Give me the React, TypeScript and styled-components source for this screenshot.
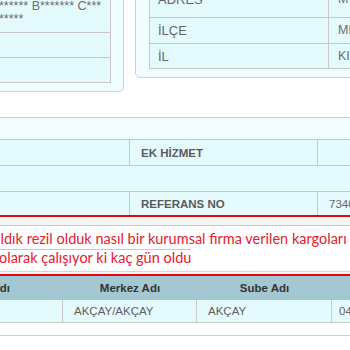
import styled, { createGlobalStyle } from 'styled-components'

const GlobalStyle = createGlobalStyle`
  html, body {
    margin: 0;
    padding: 0;
    background: #ffffff;
    overflow: hidden;
  }
  body {
    font-family: 'Liberation Sans', Arial, sans-serif;
    color: #666666;
  }
`

const Page = styled.div`
  width: 820px;
  margin-left: -200px;
`

const TopSection = styled.div`
  display: flex;
  align-items: flex-start;
  gap: 11px;
  margin-top: -17px;
`

const Panel = styled.div<{ $width?: number; $lift?: number }>`
  box-sizing: border-box;
  ${(props) => (props.$width ? `width: ${props.$width}px;` : 'flex: 1;')}
  margin-top: ${(props) => -(props.$lift ?? 0)}px;
  background-color: #effdfe;
  border: 1px solid #c9d1d3;
  border-radius: 5px;
  padding: 8px 12px 8px 13px;
`

const InfoTable = styled.div`
  border: 1px solid #c8c8c8;
  background-color: #e4fafd;
`

const InfoRow = styled.div<{ $height: number; $label: number }>`
  box-sizing: border-box;
  display: grid;
  grid-template-columns: ${(props) => props.$label}px 1fr;
  height: ${(props) => props.$height}px;
  border-bottom: 1px solid #c8c8c8;

  &:last-child {
    border-bottom: none;
  }
`

const InfoLabel = styled.div`
  display: flex;
  align-items: center;
  padding-left: 8px;
  border-right: 1px solid #c8c8c8;
  font-size: 13px;
  color: #666666;
`

const InfoValue = styled.div`
  display: flex;
  flex-direction: column;
  justify-content: center;
  padding-left: 9px;
  font-size: 12.5px;
  line-height: 13px;
  color: #6c6c6c;
  white-space: nowrap;
`

const MidPanel = styled.div`
  margin-top: 25px;
  background-color: #effdfe;
  border-top: 1px solid #c8c8c8;
  padding-top: 21px;
`

const DetailTable = styled.div`
  border-top: 1px solid #c8c8c8;
  background-color: #e4fafd;
`

const DetailRow = styled.div<{ $height: number; $last?: boolean }>`
  box-sizing: border-box;
  display: grid;
  grid-template-columns: 330px 188px 1fr;
  height: ${(props) => props.$height}px;
  border-bottom: ${(props) => (props.$last ? 'none' : '1px solid #c8c8c8')};
`

const DetailCell = styled.div<{ $bold?: boolean; $span?: boolean }>`
  display: flex;
  align-items: center;
  padding-left: 11px;
  font-size: 11.5px;
  font-weight: ${(props) => (props.$bold ? 'bold' : 'normal')};
  color: ${(props) => (props.$bold ? '#5a5a5a' : '#666666')};
  border-right: ${(props) => (props.$span ? 'none' : '1px solid #c8c8c8')};
  grid-column: ${(props) => (props.$span ? '1 / -1' : 'auto')};

  &:last-child {
    border-right: none;
  }
`

const ComplaintBox = styled.div`
  border-top: 2px solid #e30613;
  border-bottom: 2px solid #e30613;
  background-color: #f4f6f6;
  padding-top: 8px;
  padding-bottom: 2px;
`

const ComplaintText = styled.div`
  background-color: #ffffff;
  border-top: 1px solid #c8c8c8;
  border-bottom: 1px solid #d8d8d8;
  padding: 3px 0 5px 199px;
  font-family: Lato, 'Noto Sans', sans-serif;
  font-size: 14.5px;
  color: #e2202e;
`

const FirstLine = styled.div`
  height: 20px;
  line-height: 20px;
  white-space: nowrap;
  text-indent: -13px;
`

const SecondLine = styled.div`
  height: 17px;
  line-height: 16px;
`

const SecondLineText = styled.span`
  display: inline-block;
  border-top: 1px solid #c8c8c8;
`

const GridHeader = styled.div`
  display: grid;
  grid-template-columns: 263px 134px 135px 1fr;
  height: 24px;
  background-color: #a3c8d2;
`

const HeaderCell = styled.div<{ $endPad?: number }>`
  display: flex;
  align-items: center;
  justify-content: ${(props) => (props.$endPad ? 'flex-end' : 'center')};
  padding-right: ${(props) => props.$endPad ?? 0}px;
  font-size: 11.5px;
  font-weight: bold;
  color: #333333;
  white-space: nowrap;
`

const GridRow = styled.div`
  box-sizing: border-box;
  display: grid;
  grid-template-columns: 263px 134px 135px 1fr;
  height: 23px;
  background-color: #e4fafd;
  border-bottom: 1px solid #c8c8c8;
`

const GridCell = styled.div`
  display: flex;
  align-items: center;
  padding-left: 11px;
  font-size: 11.5px;
  color: #5f5f5f;
  border-right: 1px solid #c8c8c8;
  white-space: nowrap;

  &:last-child {
    border-right: none;
    padding-left: 7px;
  }
`

const Footer = styled.div`
  margin-top: 12px;
  border-top: 1px solid #d0d0d0;
  height: 20px;
`

export default function App() {
  return (
    <>
      <GlobalStyle />
      <Page>
        <TopSection>
          <Panel $width={324}>
            <InfoTable>
              <InfoRow $height={40} $label={175}>
                <InfoLabel>AD SOYAD</InfoLabel>
                <InfoValue>
                  <span>****** B******* C***</span>
                  <span>*****</span>
                </InfoValue>
              </InfoRow>
              <InfoRow $height={25} $label={175}>
                <InfoLabel>TELEFON</InfoLabel>
                <InfoValue />
              </InfoRow>
              <InfoRow $height={24} $label={175}>
                <InfoLabel>E-POSTA</InfoLabel>
                <InfoValue />
              </InfoRow>
            </InfoTable>
          </Panel>
          <Panel $lift={12}>
            <InfoTable>
              <InfoRow $height={37} $label={179}>
                <InfoLabel>ADRES</InfoLabel>
                <InfoValue>M***</InfoValue>
              </InfoRow>
              <InfoRow $height={26} $label={179}>
                <InfoLabel>İLÇE</InfoLabel>
                <InfoValue>MERKEZ</InfoValue>
              </InfoRow>
              <InfoRow $height={24} $label={179}>
                <InfoLabel>İL</InfoLabel>
                <InfoValue>KIRKLARELİ</InfoValue>
              </InfoRow>
            </InfoTable>
          </Panel>
        </TopSection>

        <MidPanel>
          <DetailTable>
            <DetailRow $height={26}>
              <DetailCell $bold>ÖDEME TİPİ</DetailCell>
              <DetailCell $bold>EK HİZMET</DetailCell>
              <DetailCell />
            </DetailRow>
            <DetailRow $height={26}>
              <DetailCell $span />
            </DetailRow>
            <DetailRow $height={23} $last>
              <DetailCell $bold>TAKİP NO</DetailCell>
              <DetailCell $bold>REFERANS NO</DetailCell>
              <DetailCell>7340</DetailCell>
            </DetailRow>
          </DetailTable>
        </MidPanel>

        <ComplaintBox>
          <ComplaintText>
            <FirstLine>
              kaldık rezil olduk nasıl bir kurumsal firma verilen kargoları
            </FirstLine>
            <SecondLine>
              <SecondLineText>olarak çalışıyor ki kaç gün oldu</SecondLineText>
            </SecondLine>
          </ComplaintText>
        </ComplaintBox>

        <GridHeader>
          <HeaderCell $endPad={53}>Birim Adı</HeaderCell>
          <HeaderCell>Merkez Adı</HeaderCell>
          <HeaderCell>Sube Adı</HeaderCell>
          <HeaderCell />
        </GridHeader>
        <GridRow>
          <GridCell />
          <GridCell>AKÇAY/AKÇAY</GridCell>
          <GridCell>AKÇAY</GridCell>
          <GridCell>04</GridCell>
        </GridRow>
        <Footer />
      </Page>
    </>
  )
}
